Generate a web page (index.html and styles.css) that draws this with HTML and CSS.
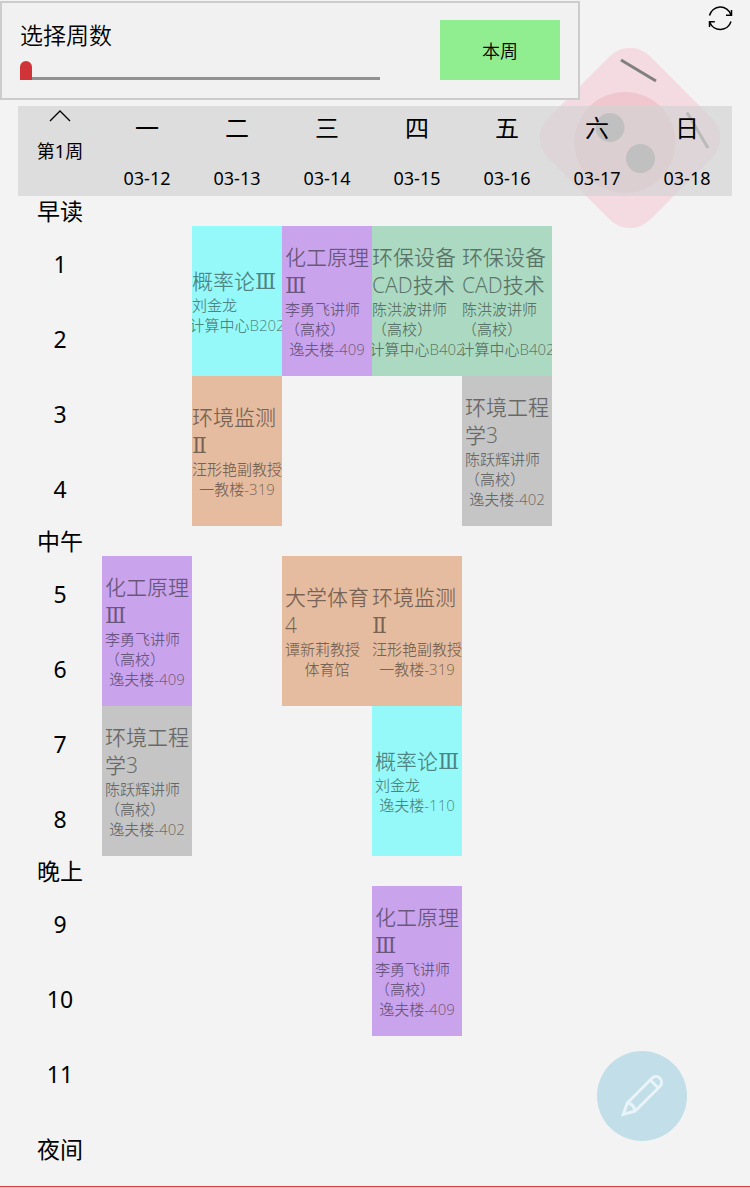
FILE: index.html
```html
<!DOCTYPE html>
<html lang="zh-CN">
<head>
<meta charset="utf-8">
<meta name="viewport" content="width=device-width, initial-scale=1">
<title>课程表</title>
<link rel="stylesheet" href="styles.css">
</head>
<body>
<svg class="backdrop" viewBox="0 0 180 180" aria-hidden="true">
  <rect x="18" y="18" width="144" height="144" rx="28" fill="#f4dbe1" transform="rotate(45 90 90)"/>
  <circle cx="85" cy="94.500" r="50.500" fill="#f0c6cf"/>
  <circle cx="70" cy="79.500" r="14.500" fill="#939393"/>
  <circle cx="100.500" cy="110.500" r="14.500" fill="#939393"/>
  <path d="M81 12L116 33M147 64.500L168 100" stroke="#808080" stroke-width="3"/>
</svg>
<header class="topbar">
  <section class="week-panel">
    <div class="week-picker">
      <label class="week-label" for="week">选择周数</label>
      <input class="week-slider" id="week" type="range" min="1" max="20" value="1">
    </div>
    <button class="week-button" type="button">本周</button>
  </section>
  <button class="refresh" type="button" aria-label="刷新">
    <svg width="25" height="25" viewBox="0 0 25 25" fill="none" stroke="#000" stroke-width="1.500">
      <path d="M1.500 9.500A11.200 11.200 0 0 1 23 8.800M23.500 4V9.200H18M23 15.500A11.200 11.200 0 0 1 1.800 16.200M1.500 21V15.800H6.800"/>
    </svg>
  </button>
</header>
<main class="schedule">
  <table class="timetable">
    <colgroup><col class="time-col"><col span="7"></colgroup>
    <thead>
      <tr>
        <th scope="col">
          <button class="week-toggle" type="button">
            <svg width="22" height="12" viewBox="0 0 22 12" fill="none" stroke="#000" stroke-width="1.300"><path d="M1 11L11 1L21 11"/></svg>
            <span>第1周</span>
          </button>
        </th>
        <th scope="col"><div class="day">一</div><div class="date">03-12</div></th>
        <th scope="col"><div class="day">二</div><div class="date">03-13</div></th>
        <th scope="col"><div class="day">三</div><div class="date">03-14</div></th>
        <th scope="col"><div class="day">四</div><div class="date">03-15</div></th>
        <th scope="col"><div class="day">五</div><div class="date">03-16</div></th>
        <th scope="col"><div class="day">六</div><div class="date">03-17</div></th>
        <th scope="col"><div class="day">日</div><div class="date">03-18</div></th>
      </tr>
    </thead>
    <tbody>
      <tr class="break"><th scope="row">早读</th><td colspan="7"></td></tr>
      <tr class="lesson">
        <th scope="row">1</th>
        <td></td>
        <td rowspan="2"><div class="course cyan"><div class="info"><div class="name">概率论<span class="numeral">Ⅲ</span></div><div class="teacher">刘金龙</div><div class="room">计算中心B202</div></div></div></td>
        <td rowspan="2"><div class="course purple"><div class="info"><div class="name">化工原理<br><span class="numeral">Ⅲ</span></div><div class="teacher">李勇飞讲师<br>（高校）</div><div class="room">逸夫楼-409</div></div></div></td>
        <td rowspan="2"><div class="course green"><div class="info"><div class="name">环保设备<br>CAD技术</div><div class="teacher">陈洪波讲师<br>（高校）</div><div class="room">计算中心B402</div></div></div></td>
        <td rowspan="2"><div class="course green"><div class="info"><div class="name">环保设备<br>CAD技术</div><div class="teacher">陈洪波讲师<br>（高校）</div><div class="room">计算中心B402</div></div></div></td>
        <td></td><td></td>
      </tr>
      <tr class="lesson"><th scope="row">2</th><td></td><td></td><td></td></tr>
      <tr class="lesson">
        <th scope="row">3</th>
        <td></td>
        <td rowspan="2"><div class="course orange"><div class="info"><div class="name">环境监测<br><span class="numeral">Ⅱ</span></div><div class="teacher">汪形艳副教授</div><div class="room">一教楼-319</div></div></div></td>
        <td></td><td></td>
        <td rowspan="2"><div class="course gray"><div class="info"><div class="name">环境工程<br>学3</div><div class="teacher">陈跃辉讲师<br>（高校）</div><div class="room">逸夫楼-402</div></div></div></td>
        <td></td><td></td>
      </tr>
      <tr class="lesson"><th scope="row">4</th><td></td><td></td><td></td><td></td><td></td></tr>
      <tr class="break"><th scope="row">中午</th><td colspan="7"></td></tr>
      <tr class="lesson">
        <th scope="row">5</th>
        <td rowspan="2"><div class="course purple"><div class="info"><div class="name">化工原理<br><span class="numeral">Ⅲ</span></div><div class="teacher">李勇飞讲师<br>（高校）</div><div class="room">逸夫楼-409</div></div></div></td>
        <td></td>
        <td rowspan="2"><div class="course orange"><div class="info"><div class="name">大学体育<br>4</div><div class="teacher">谭新莉教授</div><div class="room">体育馆</div></div></div></td>
        <td rowspan="2"><div class="course orange"><div class="info"><div class="name">环境监测<br><span class="numeral">Ⅱ</span></div><div class="teacher">汪形艳副教授</div><div class="room">一教楼-319</div></div></div></td>
        <td></td><td></td><td></td>
      </tr>
      <tr class="lesson"><th scope="row">6</th><td></td><td></td><td></td><td></td></tr>
      <tr class="lesson">
        <th scope="row">7</th>
        <td rowspan="2"><div class="course gray"><div class="info"><div class="name">环境工程<br>学3</div><div class="teacher">陈跃辉讲师<br>（高校）</div><div class="room">逸夫楼-402</div></div></div></td>
        <td></td><td></td>
        <td rowspan="2"><div class="course cyan"><div class="info"><div class="name">概率论<span class="numeral">Ⅲ</span></div><div class="teacher">刘金龙</div><div class="room">逸夫楼-110</div></div></div></td>
        <td></td><td></td><td></td>
      </tr>
      <tr class="lesson"><th scope="row">8</th><td></td><td></td><td></td><td></td><td></td></tr>
      <tr class="break"><th scope="row">晚上</th><td colspan="7"></td></tr>
      <tr class="lesson">
        <th scope="row">9</th>
        <td></td><td></td><td></td>
        <td rowspan="2"><div class="course purple"><div class="info"><div class="name">化工原理<br><span class="numeral">Ⅲ</span></div><div class="teacher">李勇飞讲师<br>（高校）</div><div class="room">逸夫楼-409</div></div></div></td>
        <td></td><td></td><td></td>
      </tr>
      <tr class="lesson"><th scope="row">10</th><td></td><td></td><td></td><td></td><td></td><td></td></tr>
      <tr class="lesson"><th scope="row">11</th><td colspan="7"></td></tr>
      <tr class="lesson"><th scope="row">夜间</th><td colspan="7"></td></tr>
    </tbody>
  </table>
</main>
<div class="bottom-edge"></div>
<button class="edit" type="button" aria-label="编辑">
  <svg width="44" height="44" viewBox="0 0 44 44" fill="none" stroke="#e9f4f8" stroke-width="3">
    <path d="M3.300 40.300L7.300 29L31.500 4.700C33.800 2.200 37.300 1.800 39.700 4C42.300 6.500 42.300 9.800 39.800 12.500L15 37.200ZM30.300 6L38.300 14M7.300 29C11.500 29.300 14.300 32.500 15 37.200"/>
  </svg>
</button>
</body>
</html>
```
FILE: styles.css
```css
* {
  box-sizing: border-box;
}

body {
  position: relative;
  margin: 0;
  background: #f3f3f3;
  color: #000;
  font-family: "Noto Sans", "Noto Sans CJK SC", sans-serif;
  font-size: 18px;
  font-weight: 350;
}

button {
  padding: 0;
  border: 0;
  background: none;
  color: inherit;
  font: inherit;
  cursor: pointer;
}

svg {
  display: block;
}

.backdrop {
  position: absolute;
  z-index: -1;
  top: 48px;
  right: 30px;
  width: 180px;
}

.topbar {
  display: flex;
  align-items: flex-start;
  justify-content: space-between;
  padding: 1px 17px 6px 0;
}

.week-panel {
  display: flex;
  flex: 0 1 580px;
  justify-content: space-between;
  gap: 20px;
  padding: 17px 18px 18px;
  border: 2px solid #ccc;
  background: #f1f1f1;
}

.week-picker {
  display: flex;
  flex: 0 1 360px;
  flex-direction: column;
  justify-content: space-between;
}

.week-label {
  font-size: 23px;
  line-height: 30px;
}

.week-slider {
  appearance: none;
  width: 100%;
  height: 19px;
  margin: 0;
  background: linear-gradient(#919191, #919191) bottom / 100% 3px no-repeat;
}

.week-slider::-webkit-slider-thumb {
  appearance: none;
  width: 12px;
  height: 19px;
  border-radius: 6px 6px 0 0;
  background: #d13438;
}

.week-button {
  width: 120px;
  height: 60px;
  background: #90ee90;
}

.refresh {
  padding-top: 5px;
}

.schedule {
  padding: 0 18px;
}

.timetable {
  width: 100%;
  border-collapse: collapse;
  table-layout: fixed;
}

.time-col {
  width: 84px;
}

.timetable th,
.timetable td {
  padding: 0;
}

.timetable th {
  font-weight: 400;
}

.timetable thead th {
  height: 90px;
  background: rgba(211, 211, 211, 0.7);
  vertical-align: top;
}

.timetable tbody th {
  font-size: 23px;
  line-height: 30px;
}

.break th {
  height: 30px;
}

.lesson th {
  height: 75px;
}

.week-toggle {
  display: flex;
  width: 100%;
  flex-direction: column;
  align-items: center;
  gap: 17px;
  padding-top: 4px;
  line-height: 24px;
}

.day {
  padding-top: 4px;
  font-size: 24px;
  line-height: 36px;
}

.date {
  padding-top: 20px;
  line-height: 24px;
}

.course {
  display: flex;
  height: 150px;
  align-items: center;
  justify-content: center;
  overflow: hidden;
  color: rgba(0, 0, 0, 0.47);
  font-size: 15px;
  line-height: 20px;
  white-space: nowrap;
}

.info {
  display: flex;
  max-width: 100%;
  flex-direction: column;
}

.name {
  font-size: 21px;
  line-height: 28px;
}

.numeral {
  font-family: "DejaVu Serif", serif;
  font-size: 22px;
  line-height: 1;
}

.room {
  align-self: center;
}

.cyan {
  background: #94f9f8;
}

.purple {
  background: #c9a4ec;
}

.green {
  background: #abd9c2;
}

.orange {
  background: #e5bc9f;
}

.gray {
  background: #c5c5c5;
}

.bottom-edge {
  height: 2px;
  border-top: 1px solid #d9403f;
  background: #d0cccc;
}

.edit {
  position: fixed;
  right: 63px;
  bottom: 47px;
  display: grid;
  width: 90px;
  height: 90px;
  place-items: center;
  border-radius: 50%;
  background: #c2dfe9;
}
```
